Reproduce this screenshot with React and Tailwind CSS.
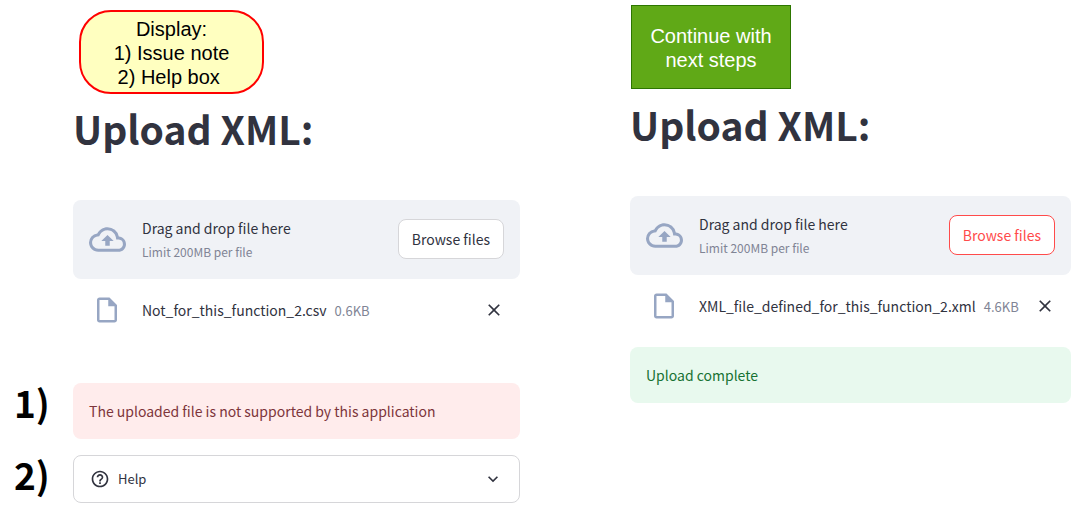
import { useState } from "react";
import {
  MdOutlineCloudUpload,
  MdOutlineInsertDriveFile,
  MdClose,
  MdHelpOutline,
  MdExpandMore,
} from "react-icons/md";

function Title({ children }) {
  return (
    <h1 className="text-[39px] leading-[48px] font-bold text-[#31333f]">{children}</h1>
  );
}

function Dropzone({ active }) {
  return (
    <div className="flex items-center rounded-lg bg-[#f0f2f6] px-4 pt-[19px] pb-5">
      <MdOutlineCloudUpload className="size-[37px] shrink-0 text-[#97a6c3]" aria-hidden="true" />
      <div className="ml-4 flex grow flex-col">
        <span className="text-[14px] leading-[18px]">Drag and drop file here</span>
        <small className="mt-2 text-[12px] leading-[14px] text-[#808495]">Limit 200MB per file</small>
      </div>
      <button
        type="button"
        className={
          active
            ? "h-10 shrink-0 rounded-lg border border-[#ff4b4b] bg-white px-[13px] text-[14px] text-[#ff4b4b]"
            : "h-10 shrink-0 rounded-lg border border-[#d6d6d9] bg-white px-[13px] text-[14px]"
        }
      >
        Browse files
      </button>
    </div>
  );
}

function FileRow({ name, size }) {
  return (
    <div className="flex h-8 items-center pr-4 pl-[19px]">
      <MdOutlineInsertDriveFile className="size-[30px] shrink-0 text-[#97a6c3]" aria-hidden="true" />
      <div className="ml-5 flex grow items-baseline gap-2 whitespace-nowrap">
        <span className="text-[14px] leading-5">{name}</span>
        <small className="text-[13px] leading-5 text-[#808495]">{size}</small>
      </div>
      <button type="button" aria-label="Remove file" className="shrink-0">
        <MdClose className="size-5" />
      </button>
    </div>
  );
}

function StepNumber({ children }) {
  return (
    <span className="self-start text-[37px] leading-[38px] font-bold text-black">{children}</span>
  );
}

export default function App() {
  const [open, setOpen] = useState(false);
  return (
    <main className="grid grid-cols-[506fr_441fr] items-start gap-x-[110px] bg-white pr-[11px] pl-[14px] font-['Noto_Sans_CJK_SC','Source_Sans_Pro',sans-serif] text-[#31333f]">
      <section className="grid grid-cols-[59px_1fr] pt-[10px]">
        <div className="col-start-2">
          <p className="ml-[6px] h-[84px] w-[185px] rounded-[32px] border-2 border-[#ff0000] bg-[#ffffc0] pt-[5px] text-center font-['Liberation_Sans',sans-serif] text-[20px] leading-6 text-black">
            Display:
            <br />
            1) Issue note
            <br />
            2) Help box&nbsp;
          </p>
          <div className="mt-[10px]">
            <Title>Upload XML:</Title>
          </div>
          <div className="mt-12">
            <Dropzone />
          </div>
          <div className="mt-[15px]">
            <FileRow name="Not_for_this_function_2.csv" size="0.6KB" />
          </div>
        </div>
        <div className="col-span-2 mt-[57px] grid grid-cols-[59px_1fr] items-center gap-y-4">
          <StepNumber>1)</StepNumber>
          <div role="alert" className="flex h-14 items-center rounded-lg bg-[#ffecec] px-4 text-[14px] text-[#7d353b]">
            The uploaded file is not supported by this application
          </div>
          <StepNumber>2)</StepNumber>
          <button
            type="button"
            aria-expanded={open}
            onClick={() => setOpen(!open)}
            className="flex h-12 items-center gap-2 rounded-lg border border-[#d6d6d9] px-4 text-[13px]"
          >
            <MdHelpOutline className="size-5" aria-hidden="true" />
            <span className="grow text-left">Help</span>
            <MdExpandMore className="size-5" aria-hidden="true" />
          </button>
        </div>
      </section>
      <section className="pt-[5px]">
        <p className="ml-px h-[84px] w-40 border border-[#2d7600] bg-[#60a917] pt-[18px] text-center font-['Liberation_Sans',sans-serif] text-[20px] leading-6 text-white">
          Continue with
          <br />
          next steps
        </p>
        <div className="mt-[11px]">
          <Title>Upload XML:</Title>
        </div>
        <div className="mt-12">
          <Dropzone active />
        </div>
        <div className="mt-[15px]">
          <FileRow name="XML_file_defined_for_this_function_2.xml" size="4.6KB" />
        </div>
        <div role="status" className="mt-[25px] flex h-14 items-center rounded-lg bg-[#e8f9ee] px-4 text-[14px] text-[#177233]">
          Upload complete
        </div>
      </section>
    </main>
  );
}
